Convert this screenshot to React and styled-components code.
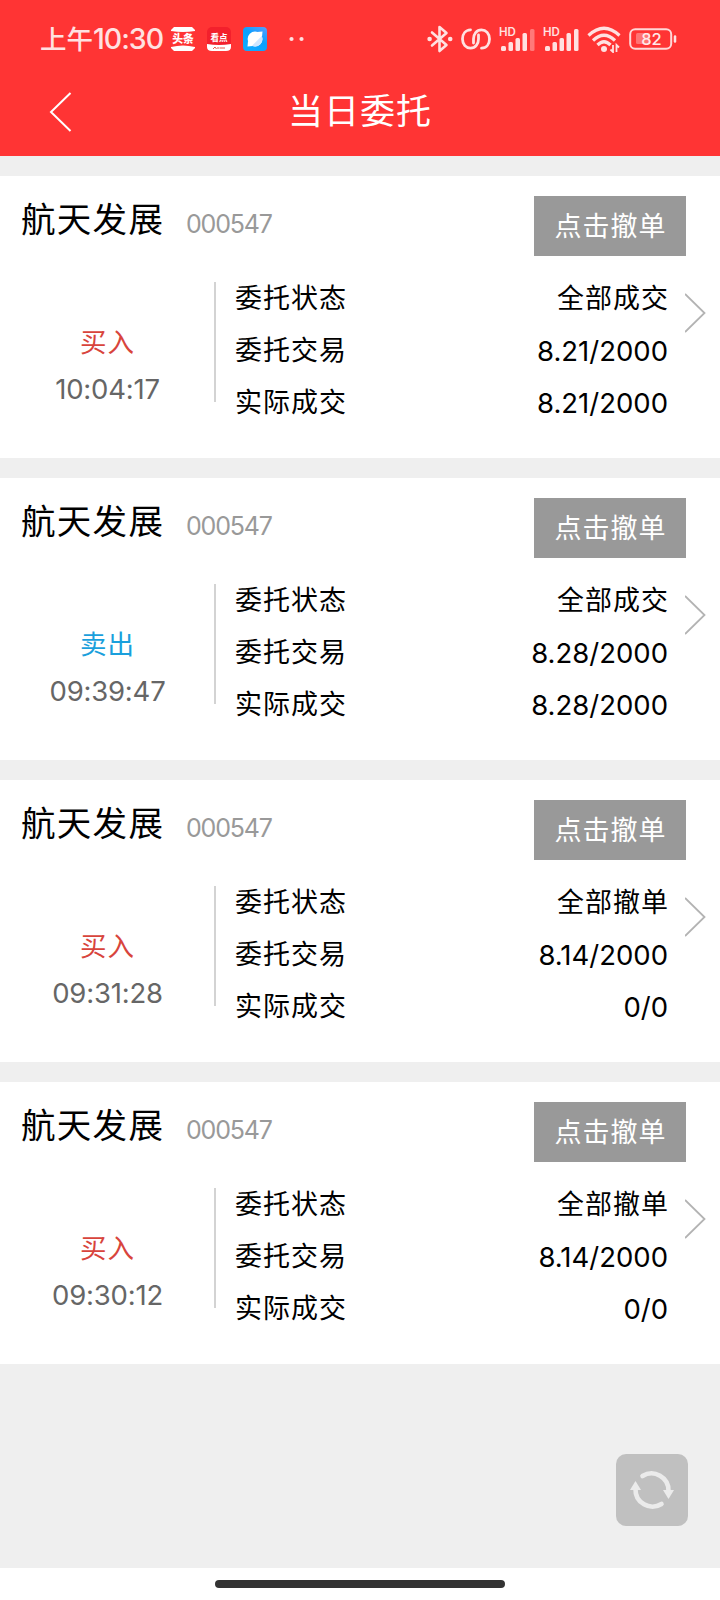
import React from 'react';
import styled, { createGlobalStyle } from 'styled-components';

const GlobalStyle = createGlobalStyle`
  * {
    box-sizing: border-box;
  }
  body {
    margin: 0;
    background-color: #efefef;
    color: #000;
    font-family: Inter, 'Noto Sans CJK SC', sans-serif;
  }
  svg {
    display: block;
    flex: none;
  }
`;

const Page = styled.div`
  display: flex;
  flex-direction: column;
  width: 720px;
  height: 1600px;
  overflow: hidden;
`;

const Header = styled.header`
  flex: none;
  height: 156px;
  background-color: #ff3434;
  color: #fff;
`;

const StatusBar = styled.div`
  display: flex;
  align-items: center;
  height: 78px;
  padding: 0 43px 0 40px;
`;

const Clock = styled.div`
  display: flex;
  width: 131px;
  font-size: 26.5px;
  font-weight: 500;
  line-height: 40px;
  color: #ffe1e1;
  white-space: nowrap;
`;

const ClockDigits = styled.span`
  font-size: 28.5px;
  letter-spacing: -1px;
`;

const AppIcons = styled.div`
  display: flex;
  align-items: center;
  gap: 12px;
`;

const SystemIcons = styled.div`
  display: flex;
  align-items: center;
  margin-left: auto;
  gap: 8px;
`;

const NavBar = styled.div`
  display: grid;
  grid-template-columns: 100px 1fr 100px;
  align-items: center;
  height: 68px;
`;

const BackButton = styled.button`
  width: 100px;
  height: 68px;
  padding: 0 0 0 49px;
  border: none;
  background: none;
  cursor: pointer;
`;

const Title = styled.h1`
  margin: 0;
  padding-bottom: 2px;
  font-size: 35px;
  font-weight: 400;
  line-height: 66px;
  letter-spacing: 1px;
  text-align: center;
`;

const OrderList = styled.main`
  flex: 1;
  display: flex;
  flex-direction: column;
  gap: 20px;
  padding-top: 20px;
`;

const Card = styled.section`
  height: 282px;
  background-color: #fff;
`;

const CardHeader = styled.div`
  display: flex;
  align-items: flex-start;
  height: 80px;
  padding: 20px 34px 0 21px;
`;

const StockName = styled.div`
  width: 165px;
  padding-top: 1px;
  font-size: 34.5px;
  line-height: 46px;
  letter-spacing: 1.3px;
  white-space: nowrap;
`;

const StockCode = styled.div`
  padding-top: 5px;
  font-size: 25px;
  font-weight: 400;
  line-height: 46px;
  letter-spacing: -1.2px;
  color: #999;
`;

const CancelButton = styled.button`
  width: 152px;
  height: 60px;
  margin-left: auto;
  padding: 0 0 4px 1px;
  border: none;
  background-color: #999;
  color: #fff;
  font-family: inherit;
  font-size: 27px;
  letter-spacing: 1px;
  cursor: pointer;
`;

const CardBody = styled.div`
  display: flex;
  align-items: flex-start;
`;

const Side = styled.div`
  width: 214px;
  padding: 62px 0 0 1px;
  line-height: 48px;
  text-align: center;
`;

const Direction = styled.div`
  font-size: 26.5px;
  letter-spacing: 1px;
  color: ${(props) => (props.$type === 'buy' ? '#d8443c' : '#1a9fdc')};
`;

const Time = styled.div`
  margin-top: -1px;
  font-size: 27.5px;
  font-weight: 400;
  letter-spacing: -0.2px;
  color: #666;
`;

const Divider = styled.div`
  width: 2px;
  height: 120px;
  margin-top: 26px;
  background-color: #d3d3d3;
`;

const Details = styled.div`
  flex: 1;
  padding: 17px 0 0 19px;
`;

const DetailRow = styled.div`
  display: flex;
  justify-content: space-between;
  font-size: 27px;
  line-height: 52px;
`;

const Label = styled.span`
  letter-spacing: 1px;
`;

const Value = styled.span`
  letter-spacing: 1px;
  margin-right: -1px;
`;

const NumberValue = styled.span`
  font-size: 27.5px;
  letter-spacing: 0;
`;

const ArrowCell = styled.div`
  width: 52px;
  padding: 36px 0 0 17px;
`;

const Footer = styled.div`
  flex: none;
  display: flex;
  align-items: center;
  justify-content: center;
  height: 32px;
  background-color: #fff;
`;

const HomeIndicator = styled.div`
  width: 290px;
  height: 8px;
  border-radius: 4px;
  background-color: #333;
`;

// Floats over the list
const RefreshButton = styled.button`
  position: absolute;
  top: 1454px;
  left: 616px;
  width: 72px;
  height: 72px;
  padding: 0;
  border: none;
  border-radius: 10px;
  background-color: #c0c0c0;
  cursor: pointer;
`;

const orders = [
  { id: 1, type: 'buy', time: '10:04:17', status: '全部成交', order: '8.21/2000', deal: '8.21/2000' },
  { id: 2, type: 'sell', time: '09:39:47', status: '全部成交', order: '8.28/2000', deal: '8.28/2000' },
  { id: 3, type: 'buy', time: '09:31:28', status: '全部撤单', order: '8.14/2000', deal: '0/0' },
  { id: 4, type: 'buy', time: '09:30:12', status: '全部撤单', order: '8.14/2000', deal: '0/0' },
];

const NewsIcon = () => (
  <svg width="24" height="24" viewBox="0 0 24 24">
    <path d="M3 0H21L24 3V4Q12 6 0 4V3Z" fill="#fff" />
    <path d="M0 20Q12 17 24 20V21L21 24H3L0 21Z" fill="#fff" />
    <text x="12" y="16.2" fontSize="10.8" fontWeight="900" textAnchor="middle" fill="#fff">头条</text>
  </svg>
);

const KandianIcon = () => (
  <svg width="24" height="24" viewBox="0 0 24 24">
    <rect width="24" height="24" rx="5" fill="#f3202c" />
    <path d="M0 17Q12 19 24 17V20Q24 24 19 24H5Q0 24 0 20Z" fill="#fff" />
    <text x="12" y="13.5" fontSize="8.6" fontWeight="700" textAnchor="middle" fill="#fff">看点</text>
    <path d="M6 22L8 20L9.5 22M11 20V22M12.5 21H18" stroke="#e65a4c" fill="none" />
  </svg>
);

const BrowserIcon = () => (
  <svg width="24" height="24" viewBox="0 0 24 24">
    <defs>
      <linearGradient id="browserBg" x1="1" y1="0" x2="0.3" y2="1">
        <stop offset="0" stopColor="#5b9dff" />
        <stop offset="0.5" stopColor="#0aa0ff" />
        <stop offset="1" stopColor="#10aaff" />
      </linearGradient>
    </defs>
    <rect width="24" height="24" rx="4" fill="url(#browserBg)" />
    <circle cx="12" cy="12" r="7.4" fill="#fff" />
    <path d="M14 5L19.500 4.500L19 10ZM5 14L4.500 19.500L10 19Z" fill="#fff" />
    <path d="M18.800 9A7.400 7.400 0 0 1 9 18.800Z" fill="#cfe6ff" />
  </svg>
);

const DotsIcon = () => (
  <svg width="30" height="6" viewBox="0 0 30 6">
    <circle cx="12.500" cy="3" r="2.100" fill="#ffe1e1" />
    <circle cx="22.500" cy="3" r="2.100" fill="#ffe1e1" />
  </svg>
);

const BluetoothIcon = () => (
  <svg width="26" height="28" viewBox="0 0 26 28" fill="none" stroke="#ffe1e1" strokeWidth="2.600">
    <path d="M5 7.500L19.500 20L12.500 26V2L19.500 8L5 20.500" strokeLinejoin="round" strokeLinecap="round" />
    <circle cx="2.600" cy="14" r="2.300" fill="#ffe1e1" stroke="none" />
    <circle cx="23.200" cy="14" r="2.300" fill="#ffe1e1" stroke="none" />
  </svg>
);

const LinkIcon = () => (
  <svg width="30" height="22" viewBox="0 0 30 22" fill="none" stroke="#ffe1e1" strokeWidth="2.800" strokeLinecap="round">
    <path d="M9.500 1.800C4.500 2 1.500 6 1.500 11C1.500 16.500 5 20.200 9.500 20.200C14.500 20.200 17.500 16 17.500 11V7" />
    <path d="M20.500 20.200C25.500 20 28.500 16 28.500 11C28.500 5.500 25 1.800 20.500 1.800C15.500 1.800 12.500 6 12.500 11V15" />
  </svg>
);

const SignalIcon = ({ full }) => (
  <svg width="36" height="26" viewBox="0 0 36 26" fill="#ffe1e1" overflow="visible">
    <text x="0" y="10" fontSize="11.500" fontWeight="600">HD</text>
    <rect x="2" y="20" width="5" height="5" rx="1.500" />
    <rect x="9.500" y="16" width="4.500" height="9" rx="1.500" />
    <rect x="16.500" y="12" width="4.500" height="13" rx="1.500" />
    <rect x="23.500" y="7" width="4.500" height="18" rx="1.500" />
    <rect x="31" y="3" width="4.500" height="22" rx="1.500" opacity={full ? 1 : 0.4} />
  </svg>
);

const WifiIcon = () => (
  <svg width="34" height="27" viewBox="0 0 34 27" fill="none" stroke="#ffe1e1" strokeWidth="3.200">
    <path d="M1.500 9.500Q17 -5 32.500 9.500" />
    <path d="M6 14.500Q17 4 28 14.500" />
    <path d="M10.500 19Q17 12.500 23.500 19" />
    <circle cx="17" cy="23" r="3" fill="#ffe1e1" stroke="none" />
    <path d="M26 19V26L23.500 23.500M29.500 26V19L32 21.500" strokeWidth="1.800" />
  </svg>
);

const BatteryIcon = () => (
  <svg width="48" height="22" viewBox="0 0 48 22" fill="none">
    <rect x="1.200" y="1.200" width="41" height="19.600" rx="5" stroke="#ffd8d8" strokeWidth="2" />
    <rect x="7" y="5" width="14" height="11" rx="1.500" fill="#ff7474" />
    <path d="M46 8.500V13.500" stroke="#ffe1e1" strokeWidth="2.500" strokeLinecap="round" />
    <text x="22.500" y="16.800" fontSize="16.500" fontWeight="500" textAnchor="middle" fill="#ffe9e9">82</text>
  </svg>
);

const BackIcon = () => (
  <svg width="23" height="40" viewBox="0 0 23 40">
    <path d="M21.500 1L2 20L21.500 39" fill="none" stroke="#fff" strokeWidth="2" />
  </svg>
);

const ArrowIcon = () => (
  <svg width="22" height="42" viewBox="0 0 22 42">
    <path d="M0 2L19.500 21L0 40" fill="none" stroke="#b3b3b3" strokeWidth="1.800" />
  </svg>
);

const RefreshIcon = () => (
  <svg width="72" height="72" viewBox="0 0 72 72" fill="none" stroke="#ebebeb" strokeWidth="4.600" strokeLinecap="round">
    <path d="M26.500 22A17 17 0 0 1 52.500 37" />
    <path d="M45.500 50A17 17 0 0 1 19.500 35" />
    <path d="M47 36H58L52.500 45Z" fill="#ebebeb" stroke="none" />
    <path d="M14 36H25L19.500 27Z" fill="#ebebeb" stroke="none" />
  </svg>
);

const OrderCard = ({ order }) => (
  <Card>
    <CardHeader>
      <StockName>航天发展</StockName>
      <StockCode>000547</StockCode>
      <CancelButton>点击撤单</CancelButton>
    </CardHeader>
    <CardBody>
      <Side>
        <Direction $type={order.type}>{order.type === 'buy' ? '买入' : '卖出'}</Direction>
        <Time>{order.time}</Time>
      </Side>
      <Divider />
      <Details>
        <DetailRow>
          <Label>委托状态</Label>
          <Value>{order.status}</Value>
        </DetailRow>
        <DetailRow>
          <Label>委托交易</Label>
          <NumberValue>{order.order}</NumberValue>
        </DetailRow>
        <DetailRow>
          <Label>实际成交</Label>
          <NumberValue>{order.deal}</NumberValue>
        </DetailRow>
      </Details>
      <ArrowCell>
        <ArrowIcon />
      </ArrowCell>
    </CardBody>
  </Card>
);

const App = () => {
  return (
    <>
      <GlobalStyle />
      <Page>
        <Header>
          <StatusBar>
            <Clock>
              上午<ClockDigits>10:30</ClockDigits>
            </Clock>
            <AppIcons>
              <NewsIcon />
              <KandianIcon />
              <BrowserIcon />
              <DotsIcon />
            </AppIcons>
            <SystemIcons>
              <BluetoothIcon />
              <LinkIcon />
              <SignalIcon />
              <SignalIcon full />
              <WifiIcon />
              <BatteryIcon />
            </SystemIcons>
          </StatusBar>
          <NavBar>
            <BackButton>
              <BackIcon />
            </BackButton>
            <Title>当日委托</Title>
          </NavBar>
        </Header>
        <OrderList>
          {orders.map((order) => (
            <OrderCard key={order.id} order={order} />
          ))}
        </OrderList>
        <Footer>
          <HomeIndicator />
        </Footer>
        <RefreshButton>
          <RefreshIcon />
        </RefreshButton>
      </Page>
    </>
  );
};

export default App;
